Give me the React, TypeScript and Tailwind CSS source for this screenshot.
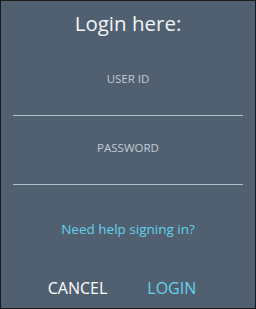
export default function App() {
  return (
    <div
      className="w-[256px] h-[309px] border border-[#1a1a1a] bg-[#506070] flex flex-col items-center text-white"
      style={{ fontFamily: '"Open Sans", "Noto Sans", sans-serif' }}
    >
      <h1 className="mt-[8px] text-[20.5px] leading-[28px] font-normal text-[#f0f4f8]">Login here:</h1>
      <div className="mt-[35px] w-[230px] flex flex-col items-center">
        <div className="text-[11.5px] leading-[14px] text-[#c0ccd6]">USER ID</div>
        <div className="mt-[29px] w-full h-px bg-[#aebecb]" />
        <div className="mt-[25px] text-[11.5px] leading-[14px] text-[#c0ccd6]">PASSWORD</div>
        <div className="mt-[29px] w-full h-px bg-[#aebecb]" />
      </div>
      <a className="mt-[35px] text-[13.5px] leading-[18px] text-[#62d2ee]">Need help signing in?</a>
      <div className="mt-[40px] mr-[12px] flex gap-[40px] text-[16px] leading-[20px]">
        <span className="text-white">CANCEL</span>
        <span className="text-[#62d2ee]">LOGIN</span>
      </div>
    </div>
  );
}
